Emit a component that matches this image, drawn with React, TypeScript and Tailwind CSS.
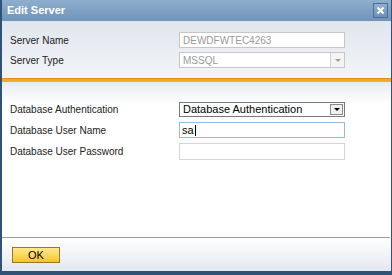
export default function App() {
  const font = { fontFamily: '"Liberation Sans", Arial, sans-serif' };
  return (
    <div className="w-[392px] h-[275px] overflow-hidden bg-white" style={font}>
      <div className="flex h-full flex-col border-[2px] border-[#2f5277] border-t-0 border-r-[1px]">
        {/* title bar */}
        <div className="flex h-[21px] items-center justify-between bg-gradient-to-b from-[#8eafcd] to-[#6f93b9] pl-[5px] pr-[3px]">
          <span className="text-[11px] font-bold text-white">Edit Server</span>
          <div className="flex h-[15px] w-[15px] items-center justify-center border border-[#4f6f92] bg-gradient-to-b from-[#8fb0d0] to-[#6d8fb4]">
            <svg width="9" height="9" viewBox="0 0 9 9">
              <path d="M1.5 1.5 L7.5 7.5 M7.5 1.5 L1.5 7.5" stroke="white" strokeWidth="2" />
            </svg>
          </div>
        </div>

        {/* top section */}
        <div className="flex flex-col gap-[4px] bg-gradient-to-b from-[#e1e6ee] to-[#f2f4f7] pt-[11px] pb-[10px] pl-[8px]">
          <div className="flex items-center">
            <span className="w-[169px] text-[10px] text-[#222]">Server Name</span>
            <div className="flex h-[16px] w-[166px] items-center border border-[#c6c6c6] bg-white px-[3px] text-[10px] text-[#9a9a9a]">
              DEWDFWTEC4263
            </div>
          </div>
          <div className="flex items-center">
            <span className="w-[169px] text-[10px] text-[#222]">Server Type</span>
            <div className="flex h-[16px] w-[166px] items-center justify-between border border-[#c6c6c6] bg-white pl-[3px] text-[10px] text-[#9a9a9a]">
              MSSQL
              <div className="flex h-full w-[14px] items-center justify-center border-l border-[#d0d0d0] bg-[#f4f4f4]">
                <div className="h-0 w-0 border-x-[3px] border-t-[3px] border-x-transparent border-t-[#a0a0a0]" />
              </div>
            </div>
          </div>
        </div>

        {/* orange divider */}
        <div className="h-[1px] bg-[#e48f10]" />
        <div className="h-[3px] bg-[#f6a929]" />

        {/* bottom section */}
        <div className="flex flex-1 flex-col bg-gradient-to-b from-[#e8ecf2] via-white via-[12%] to-white pt-[20px] pl-[8px]">
          <div className="flex flex-col gap-[5px]">
            <div className="flex items-center">
              <span className="w-[169px] text-[10px] text-[#222]">Database Authentication</span>
              <div className="flex h-[15px] w-[166px] items-center justify-between border border-[#7a7a7a] bg-white pl-[3px] pr-[1px] text-[11px] text-black">
                Database Authentication
                <div className="flex h-[11px] w-[13px] items-center justify-center border border-[#8a8a8a] bg-[#f0f0f0]">
                  <div className="h-0 w-0 border-x-[3px] border-t-[3px] border-x-transparent border-t-black" />
                </div>
              </div>
            </div>
            <div className="flex items-center">
              <span className="w-[169px] text-[10px] text-[#222]">Database User Name</span>
              <div className="flex h-[16px] w-[166px] items-center border border-[#8fbfe0] bg-white px-[2px] text-[11px] text-black">
                sa<span className="ml-[1px] h-[11px] w-[1px] bg-black" />
              </div>
            </div>
            <div className="flex items-center">
              <span className="w-[169px] text-[10px] text-[#222]">Database User Password</span>
              <div className="h-[17px] w-[166px] border border-[#d4d4d4] bg-white" />
            </div>
          </div>

          <div className="flex-1" />

          {/* footer */}
          <div className="mr-[1px] -ml-[8px] h-[1px] bg-[#9a9a9a]" />
          <div className="-ml-[8px] flex h-[33px] items-start bg-gradient-to-b from-white to-[#e3e7ee] pt-[9px] pl-[10px]">
            <button className="flex h-[16px] w-[48px] items-center justify-center border border-[#8f7a2a] bg-gradient-to-b from-[#ffe98a] to-[#f7c51c] text-[11px] text-black">
              OK
            </button>
          </div>
        </div>
        <div className="h-[2px] bg-[#2f5277]" />
      </div>
    </div>
  );
}
